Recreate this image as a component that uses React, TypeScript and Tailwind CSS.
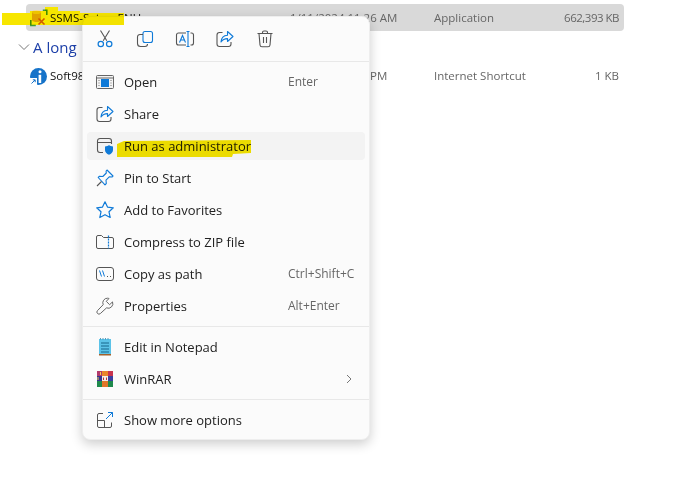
const BLUE = '#0f7ad8';
const GRAY = '#555';

const Cut = () => (
  <svg width="20" height="20" viewBox="0 0 20 20" fill="none">
    <path d="M5.500 1.500 11.800 11.800M14.500 1.500 8.200 11.800" stroke={GRAY} strokeWidth="1.100" />
    <circle cx="5.800" cy="15" r="2.700" stroke={BLUE} strokeWidth="1.200" />
    <circle cx="14.200" cy="15" r="2.700" stroke={BLUE} strokeWidth="1.200" />
  </svg>
);

const Copy = () => (
  <svg width="20" height="20" viewBox="0 0 20 20" fill="none">
    <rect x="8" y="2.500" width="9.500" height="11" rx="2" stroke={BLUE} strokeWidth="1.100" />
    <path d="M8 5.500H5a2.500 2.500 0 0 0-2.500 2.500v6.500A3 3 0 0 0 5.500 17.500H10a2.500 2.500 0 0 0 2.500-2.500" stroke={GRAY} strokeWidth="1.100" />
  </svg>
);

const Rename = () => (
  <svg width="20" height="20" viewBox="0 0 20 20" fill="none">
    <path d="M11 4H3.500A2 2 0 0 0 1.500 6v8a2 2 0 0 0 2 2H11M15.500 4h1a2 2 0 0 1 2 2v8a2 2 0 0 1-2 2h-1" stroke={GRAY} strokeWidth="1.100" />
    <path d="M11.500 2.500h3M11.500 17.500h3M13 2.500v15" stroke={BLUE} strokeWidth="1.100" />
    <path d="M4.500 13.500 7.500 6.500l3 7M5.600 11h3.800" stroke={BLUE} strokeWidth="1.100" />
  </svg>
);

const Share = () => (
  <svg width="20" height="20" viewBox="0 0 20 20" fill="none">
    <path d="M7.500 3.500H4.500a2.500 2.500 0 0 0-2.500 2.500v9a2.500 2.500 0 0 0 2.500 2.500h9A2.500 2.500 0 0 0 16 15v-2" stroke={GRAY} strokeWidth="1.100" />
    <path d="M12.500 2.500 18 7.500l-5.500 5V9.600c-3 0-5 1-6.500 3.400.3-4 2.500-6.500 6.500-6.700z" stroke={BLUE} strokeWidth="1.100" strokeLinejoin="round" />
  </svg>
);

const Trash = () => (
  <svg width="20" height="20" viewBox="0 0 20 20" fill="none" stroke={GRAY} strokeWidth="1.100">
    <path d="M2.500 4.500h15M7.500 4.500V3.500a1.500 1.500 0 0 1 1.500-1.500h2a1.500 1.500 0 0 1 1.500 1.500v1M4 4.500 5 16a2 2 0 0 0 2 1.800h6a2 2 0 0 0 2-1.800l1-11.500M8.500 8v6M11.500 8v6" />
  </svg>
);

const OpenIcon = () => (
  <svg width="18" height="14" viewBox="0 0 18 14" fill="none">
    <rect x=".5" y=".5" width="17" height="13" rx="1" fill="#f4f4f4" stroke="#666" />
    <path d="M1 3h16" stroke="#666" />
    <rect x="5" y="4" width="8" height="8" fill={BLUE} />
    <path d="M2.500 5.500h1M2.500 8h1M2.500 10.500h1M14.500 5.500h1M14.500 8h1M14.500 10.500h1" stroke="#777" />
  </svg>
);

const RunAs = () => (
  <svg width="20" height="20" viewBox="0 0 20 20" fill="none">
    <path d="M8 16.500H5A2.500 2.500 0 0 1 2.500 14V5A2.500 2.500 0 0 1 5 2.500h9A2.500 2.500 0 0 1 16.500 5v3M2.500 6.500h14" stroke={GRAY} strokeWidth="1.100" />
    <path d="M14 9c1.200 1 2.300 1.400 4 1.500v3.500c0 2.300-1.500 3.700-4 4.800-2.500-1.100-4-2.500-4-4.800v-3.500c1.700-.1 2.800-.5 4-1.500z" fill={BLUE} />
  </svg>
);

const Pin = () => (
  <svg width="20" height="20" viewBox="0 0 20 20" fill="none">
    <path d="M12 2 18 8l-1 1-2.500-.3-3.500 3.500.3 3.300-1.300 1.300L3.200 9.500l1.300-1.300 3.300.3 3.500-3.500L11.100 3z" stroke={BLUE} strokeWidth="1.100" strokeLinejoin="round" />
    <path d="M6.500 13.500 2 18" stroke={GRAY} strokeWidth="1.100" />
  </svg>
);

const Star = () => (
  <svg width="20" height="20" viewBox="0 0 20 20" fill="none">
    <path d="m10 1.800 2.500 5.300 5.800.7-4.300 4 1.200 5.700L10 14.700l-5.200 2.800L6 11.800l-4.300-4 5.800-.7z" stroke={BLUE} strokeWidth="1.200" strokeLinejoin="round" />
  </svg>
);

const Zip = () => (
  <svg width="18" height="16" viewBox="0 0 18 16" fill="none">
    <path d="M.5 13V3A1.500 1.500 0 0 1 2 1.500h3.500L7.500 3.500H16A1.500 1.500 0 0 1 17.500 5v8a1.500 1.500 0 0 1-1.500 1.500H2A1.500 1.500 0 0 1 .5 13z" stroke={GRAY} />
    <path d="M12.500 1.500v13" stroke={BLUE} strokeWidth="1.200" strokeDasharray="2 1" />
  </svg>
);

const PathIcon = () => (
  <svg width="18" height="14" viewBox="0 0 18 14" fill="none">
    <rect x=".5" y=".5" width="17" height="13" rx="2.500" stroke={GRAY} />
    <path d="m3.500 3.500 2 6M6.500 3.500l2 6" stroke={BLUE} />
    <path d="M11 9.500h1M14 9.500h1" stroke={GRAY} />
  </svg>
);

const Wrench = () => (
  <svg width="18" height="18" viewBox="0 0 18 18" fill="none">
    <path d="M11.500 1.200a4.600 4.600 0 0 1 1.500.3l-2.700 2.800 3.300 3.400 2.900-2.800a4.600 4.600 0 0 1-6 6L4.400 16.500a2 2 0 0 1-2.900-2.900L7.200 7.700a4.600 4.600 0 0 1 4.300-6.500z" stroke="#666" strokeLinejoin="round" />
  </svg>
);

const Notepad = () => (
  <svg width="14" height="18" viewBox="0 0 14 18" fill="none">
    <rect x="1" y="1" width="12" height="15" fill="#5cc3e8" />
    <rect x="1" y="16" width="12" height="1.500" fill="#a2622d" />
    <path d="M2 .8h1M4.500.8h1M7 .8h1M9.500.8h1" stroke="#1d6f99" />
    <path d="M3 5h8M3 8h8M3 11h8M3 14h8" stroke="#17678c" />
  </svg>
);

const WinRar = () => (
  <svg width="16" height="16" viewBox="0 0 16 16">
    <rect width="5" height="5" fill="#b23a6b" />
    <rect x="5" width="6" height="5" fill="#e8862a" />
    <rect x="11" width="5" height="5" fill="#c8344f" />
    <rect y="5" width="5" height="5" fill="#35358f" />
    <rect x="5" y="5" width="6" height="5" fill="#f3f0e6" />
    <rect x="11" y="5" width="5" height="5" fill="#3a3fa0" />
    <rect y="10" width="5" height="6" fill="#1f8a4c" />
    <rect x="5" y="10" width="6" height="6" fill="#e0762a" />
    <rect x="11" y="10" width="5" height="6" fill="#1f8a4c" />
    <path d="M6.500 9V6.500M9.500 9V6.500" stroke="#b33" />
    <path d="M1 6v3M3.500 1v3" stroke="#f2d24a" />
  </svg>
);

const MoreIcon = () => (
  <svg width="18" height="18" viewBox="0 0 18 18" fill="none">
    <path d="M7 2.500H3A1.500 1.500 0 0 0 1.500 4v11A1.500 1.500 0 0 0 3 16.500h11a1.500 1.500 0 0 0 1.500-1.500v-3.500M1.500 9.500h7v7" stroke={GRAY} />
    <path d="M10 8 16.500 1.500M12 1.500h4.500V6" stroke={BLUE} />
  </svg>
);

const Chevron = ({ d, className }: { d: string; className?: string }) => (
  <svg width="12" height="12" viewBox="0 0 12 12" fill="none" className={className}>
    <path d={d} stroke="#777" />
  </svg>
);

const SetupIcon = () => (
  <svg width="18" height="18" viewBox="0 0 18 18" fill="none">
    <path d="M.8 11v5.500h5M16.800 6V1.200h-4" stroke="#3f9a35" strokeWidth="1.500" />
    <path d="M2 3v8c0 1.500 3 2 5 2s4-.5 4-2V3z" fill="#e9b44c" />
    <ellipse cx="6.500" cy="3" rx="4.500" ry="2" fill="#f6d98c" />
    <path d="m8.500 9.500 6 6M14.500 9.500l-6 6" stroke="#d9622b" strokeWidth="1.600" />
  </svg>
);

const InfoLink = () => (
  <svg width="17" height="17" viewBox="0 0 17 17">
    <circle cx="8.500" cy="8.500" r="8.500" fill="#1673c9" />
    <circle cx="10" cy="3.800" r="1.500" fill="#fff" />
    <path d="M8.600 6.800h2.600v8.200H8.600z" fill="#fff" />
    <rect x="0" y="10" width="7" height="7" fill="#fff" />
    <path d="M1.500 15.500 5 12M2.800 11.800H5.200v2.400" stroke="#1673c9" fill="none" />
  </svg>
);

type Item = { icon: React.ReactNode; label: string; hint?: string; active?: boolean; more?: boolean };

const MenuRow = ({ icon, label, hint, active, more }: Item) => (
  <div className={`flex h-7 items-center rounded text-[13px] leading-none text-[#222] ${active ? 'bg-[#f3f3f3]' : ''}`}>
    <span className="flex w-9 shrink-0 justify-center">{icon}</span>
    <span className="w-[165px] shrink-0 pl-[1px]">{label}</span>
    {hint && <span className="whitespace-nowrap text-[12px] text-[#666]">{hint}</span>}
    {more && <Chevron d="M4 2l4 4-4 4" className="ml-[55px]" />}
  </div>
);

const Divider = () => <div className="-mx-[4px] my-[6px] h-px bg-[#e8e8e8]" />;

// yellow marker strokes, same outline is used as a white underlay in the selected row
const MARK_FILE = 'M2 13H30V11H45V7H58V11H80V13H124V25H2z';
const MARK_RUN = 'M117 144 124 141 251 140 251 153 233 154 232 157 117 157z';

export default function App() {
  const mainItems: Item[] = [
    { icon: <OpenIcon />, label: 'Open', hint: 'Enter' },
    { icon: <Share />, label: 'Share' },
    { icon: <RunAs />, label: 'Run as administrator', active: true },
    { icon: <Pin />, label: 'Pin to Start' },
    { icon: <Star />, label: 'Add to Favorites' },
    { icon: <Zip />, label: 'Compress to ZIP file' },
    { icon: <PathIcon />, label: 'Copy as path', hint: 'Ctrl+Shift+C' },
    { icon: <Wrench />, label: 'Properties', hint: 'Alt+Enter' },
  ];

  return (
    <div className="relative h-[491px] w-[674px] overflow-hidden bg-white pt-1 font-['Open_Sans','Noto_Sans',sans-serif]">
      {/* file list behind the menu */}
      <div className="relative ml-[26px] grid h-[27px] w-[598px] grid-cols-[264px_144px_100px_85px] items-center rounded-sm bg-[#d9d9d9] text-[11.5px] text-[#666]">
        <svg width="674" height="491" className="absolute -top-1 -left-[26px] overflow-visible">
          <path d={MARK_FILE} fill="#fff" />
        </svg>
        <div className="relative flex items-center gap-0.5 pl-1 text-[#111]">
          <SetupIcon />
          <span>SSMS-Setup-ENU</span>
        </div>
        <span className="relative">1/11/2024 11:26 AM</span>
        <span>Application</span>
        <span className="text-right tracking-[-0.5px]">662,393 KB</span>
      </div>
      <div className="mt-[6px] flex h-[20px] items-center pl-[18px] text-[15px] text-[#1c3fa8]">
        <Chevron d="M1 3.500l5 5 5-5" />
        <span className="ml-[3px]">A long</span>
      </div>
      <div className="mt-[9px] ml-[26px] grid h-[20px] w-[598px] grid-cols-[264px_144px_100px_85px] items-center text-[11.5px] text-[#666]">
        <div className="flex items-center gap-[3px] pl-1 text-[#111]">
          <InfoLink />
          <span>Soft98</span>
        </div>
        <span className="pl-[80px]">PM</span>
        <span>Internet Shortcut</span>
        <span className="text-right">1 KB</span>
      </div>

      {/* context menu */}
      <div className="absolute top-4 left-[82px] w-[288px] rounded-lg border border-[#eee] bg-[#fbfbfb] px-[4px] pb-[5px] shadow-[0_4px_12px_rgba(0,0,0,0.2)]">
        <div className="-mx-[2px] flex h-[44px] items-center">
          {[<Cut key="cut" />, <Copy key="copy" />, <Rename key="rename" />, <Share key="share" />, <Trash key="trash" />].map((icon, i) => (
            <span key={i} className="flex w-10 justify-center">{icon}</span>
          ))}
        </div>
        <div className="-mx-[4px] mb-[6px] h-px bg-[#e8e8e8]" />
        <div className="flex flex-col gap-1">
          {mainItems.map((item) => (
            <MenuRow key={item.label} {...item} />
          ))}
        </div>
        <Divider />
        <div className="flex flex-col gap-1">
          <MenuRow icon={<Notepad />} label="Edit in Notepad" />
          <MenuRow icon={<WinRar />} label="WinRAR" more />
        </div>
        <Divider />
        <MenuRow icon={<MoreIcon />} label="Show more options" />
      </div>

      {/* highlighter marks drawn on top of the screenshot */}
      <svg width="674" height="491" className="pointer-events-none absolute inset-0 mix-blend-multiply">
        <path d={MARK_FILE} fill="#f7e600" />
        <path d={MARK_RUN} fill="#f7e600" />
      </svg>
    </div>
  );
}
